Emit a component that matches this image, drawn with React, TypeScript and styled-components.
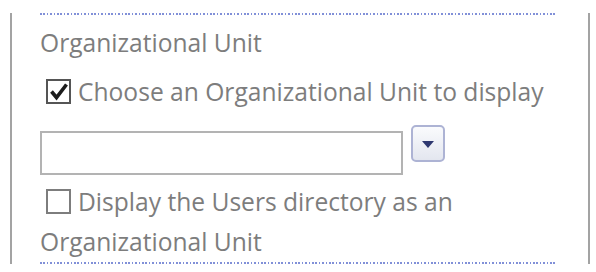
import React from 'react';
import styled, { createGlobalStyle } from 'styled-components';

const GlobalStyle = createGlobalStyle`
  body {
    margin: 0;
    background: #ffffff;
    font-family: "Open Sans", "Noto Sans", sans-serif;
  }
`;

const App = () => {
  return (
    <>
      <GlobalStyle />
      <Panel>
        <Divider />
        <Heading>Organizational Unit</Heading>
        <CheckLine>
          <Box checked>
            <svg width="21" height="21" viewBox="0 0 21 21">
              <polyline points="3.5,10.5 8.5,16.5 18.5,3.5" fill="none" stroke="#1c1c1c" strokeWidth="3.6" />
            </svg>
          </Box>
          Choose an Organizational Unit to display
        </CheckLine>
        <PickerRow>
          <TextInput type="text" />
          <DropButton aria-label="Browse">
            <Triangle />
          </DropButton>
        </PickerRow>
        <WrapLine>
          <Box />
          Display the Users directory as an Organizational Unit
        </WrapLine>
        <Divider />
      </Panel>
    </>
  );
};

export default App;

const Panel = styled.div`
  margin: 13px 0 0 10px;
  width: 517px;
  padding: 0 31px 0 28px;
  border-left: 2px solid #a3a3a3;
  border-right: 2px solid #a3a3a3;
  color: #7d7d7d;
  font-size: 24.6px;
`;

const Divider = styled.div`
  height: 2px;
  background-image: repeating-linear-gradient(to right, #8190d8 0 1.6px, transparent 1.6px 3.4px);
`;

const Heading = styled.div`
  margin-top: 12px;
  line-height: 32px;
`;

const CheckLine = styled.div`
  margin-top: 17px;
  line-height: 32px;
  white-space: nowrap;
`;

const Box = styled.span<{ checked?: boolean }>`
  display: inline-block;
  box-sizing: border-box;
  width: 25px;
  height: 25px;
  margin: 0 7px 0 6px;
  vertical-align: -3px;
  border: 2px solid ${p => (p.checked ? '#555555' : '#7d7d7d')};
  background: #ffffff;

  svg {
    display: block;
  }
`;

const PickerRow = styled.div`
  display: flex;
  align-items: flex-start;
  margin-top: 17px;
`;

const TextInput = styled.input`
  box-sizing: border-box;
  width: 363px;
  height: 44px;
  margin: 6px 0 0;
  border: 2px solid #b3b3b3;
  background: #ffffff;
  outline: none;
`;

const DropButton = styled.button`
  box-sizing: border-box;
  width: 34px;
  height: 37px;
  margin-left: 8px;
  padding: 0;
  display: flex;
  align-items: center;
  justify-content: center;
  border: 2px solid #adb3d4;
  border-radius: 5px;
  background: linear-gradient(#fafbfd, #e3e6ef);
`;

const Triangle = styled.span`
  width: 0;
  height: 0;
  margin-top: 1px;
  border-left: 6px solid transparent;
  border-right: 6px solid transparent;
  border-top: 7px solid #2e3870;
`;

const WrapLine = styled.div`
  margin-top: 7px;
  line-height: 40px;
`;
